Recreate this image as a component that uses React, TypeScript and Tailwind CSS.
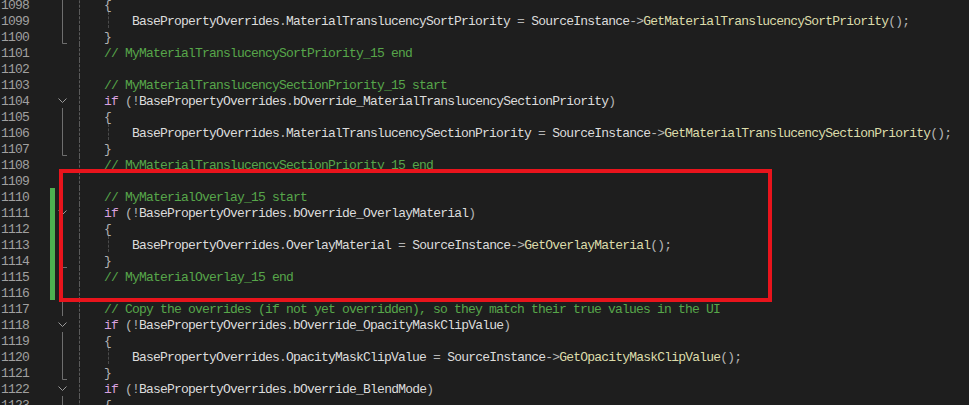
import React from 'react';

type Fold = 'line' | 'end' | 'open' | 'none';

interface CodeLine {
  n: number;
  code: string;
  indent?: boolean;
  fold: Fold;
  changed?: boolean;
}

const lines: CodeLine[] = [
  { n: 1098, code: '{', fold: 'line' },
  { n: 1099, code: 'BasePropertyOverrides.MaterialTranslucencySortPriority = SourceInstance->GetMaterialTranslucencySortPriority();', indent: true, fold: 'line' },
  { n: 1100, code: '}', fold: 'end' },
  { n: 1101, code: '// MyMaterialTranslucencySortPriority_15 end', fold: 'none' },
  { n: 1102, code: '', fold: 'none' },
  { n: 1103, code: '// MyMaterialTranslucencySectionPriority_15 start', fold: 'none' },
  { n: 1104, code: 'if (!BasePropertyOverrides.bOverride_MaterialTranslucencySectionPriority)', fold: 'open' },
  { n: 1105, code: '{', fold: 'line' },
  { n: 1106, code: 'BasePropertyOverrides.MaterialTranslucencySectionPriority = SourceInstance->GetMaterialTranslucencySectionPriority();', indent: true, fold: 'line' },
  { n: 1107, code: '}', fold: 'end' },
  { n: 1108, code: '// MyMaterialTranslucencySectionPriority_15 end', fold: 'none' },
  { n: 1109, code: '', fold: 'none' },
  { n: 1110, code: '// MyMaterialOverlay_15 start', fold: 'none', changed: true },
  { n: 1111, code: 'if (!BasePropertyOverrides.bOverride_OverlayMaterial)', fold: 'open', changed: true },
  { n: 1112, code: '{', fold: 'line', changed: true },
  { n: 1113, code: 'BasePropertyOverrides.OverlayMaterial = SourceInstance->GetOverlayMaterial();', indent: true, fold: 'line', changed: true },
  { n: 1114, code: '}', fold: 'end', changed: true },
  { n: 1115, code: '// MyMaterialOverlay_15 end', fold: 'none', changed: true },
  { n: 1116, code: '', fold: 'none', changed: true },
  { n: 1117, code: '// Copy the overrides (if not yet overridden), so they match their true values in the UI', fold: 'line' },
  { n: 1118, code: 'if (!BasePropertyOverrides.bOverride_OpacityMaskClipValue)', fold: 'open' },
  { n: 1119, code: '{', fold: 'line' },
  { n: 1120, code: 'BasePropertyOverrides.OpacityMaskClipValue = SourceInstance->GetOpacityMaskClipValue();', indent: true, fold: 'line' },
  { n: 1121, code: '}', fold: 'end' },
  { n: 1122, code: 'if (!BasePropertyOverrides.bOverride_BlendMode)', fold: 'open' },
  { n: 1123, code: '{', fold: 'line' },
];

// Split a line into coloured tokens, roughly like the VS dark theme
function tokens(code: string) {
  if (code.trimStart().startsWith('//')) {
    return [<span key="c" className="text-[#57a64a]">{code}</span>];
  }
  const parts = code.match(/[A-Za-z_][A-Za-z0-9_]*|\s+|->|./g) || [];
  return parts.map((t, i) => {
    let cls = 'text-[#b4b4b4]';
    if (t === 'if') cls = 'text-[#d8a0df]';
    else if (/^[A-Za-z_]/.test(t)) cls = parts[i + 1] === '(' ? 'text-[#dcdcaa]' : 'text-[#dcdcdc]';
    return (
      <span key={i} className={cls}>
        {t}
      </span>
    );
  });
}

function FoldMark({ fold }: { fold: Fold }) {
  return (
    <svg width="17" height="16" viewBox="0 0 17 16" className="shrink-0">
      {fold === 'line' && <line x1="7.5" y1="0" x2="7.5" y2="16" stroke="#6e6e6e" strokeWidth="1" />}
      {fold === 'end' && <polyline points="7.5,0 7.5,15.5 12,15.5" fill="none" stroke="#6e6e6e" strokeWidth="1" />}
      {fold === 'open' && <polyline points="3.5,6.5 7.5,10.5 11.5,6.5" fill="none" stroke="#9a9a9a" strokeWidth="1" />}
    </svg>
  );
}

export default function App() {
  return (
    <div className="relative w-[969px] h-[405px] overflow-hidden bg-[#1e1e1e] font-['Liberation_Mono',monospace] text-[13px] tracking-[-0.8px] leading-[16px]">
      <div className="-mt-[4px] flex flex-col">
        {lines.map((l) => (
          <div key={l.n} className="flex h-[16px] items-stretch">
            {/* Line number */}
            <div className="w-[50px] pl-[1px] text-[#a0a0a0]">
              <span className="inline-block translate-y-[2px]">{l.n}</span>
            </div>
            {/* Change bar */}
            <div className={`w-[5px] ${l.changed ? 'bg-[#4caf50]' : ''}`} />
            {/* Outlining margin */}
            <FoldMark fold={l.fold} />
            {/* Outer indent guide */}
            <div className="w-[32px] flex">
              <div className="ml-[7px] border-l border-dashed border-[#5a5a5a]" />
            </div>
            {/* Code */}
            <div className="flex whitespace-pre">
              {l.indent && (
                <span className="w-[28px] flex">
                  <span className="ml-[4px] border-l border-dashed border-[#4a4a4a]" />
                </span>
              )}
              <span className="inline-block translate-y-[2px]">{tokens(l.code)}</span>
            </div>
          </div>
        ))}
      </div>

      {/* Annotation box */}
      <div className="absolute left-[59px] top-[169px] w-[713px] h-[133px] border-4 border-[#e8141c]" />
    </div>
  );
}
